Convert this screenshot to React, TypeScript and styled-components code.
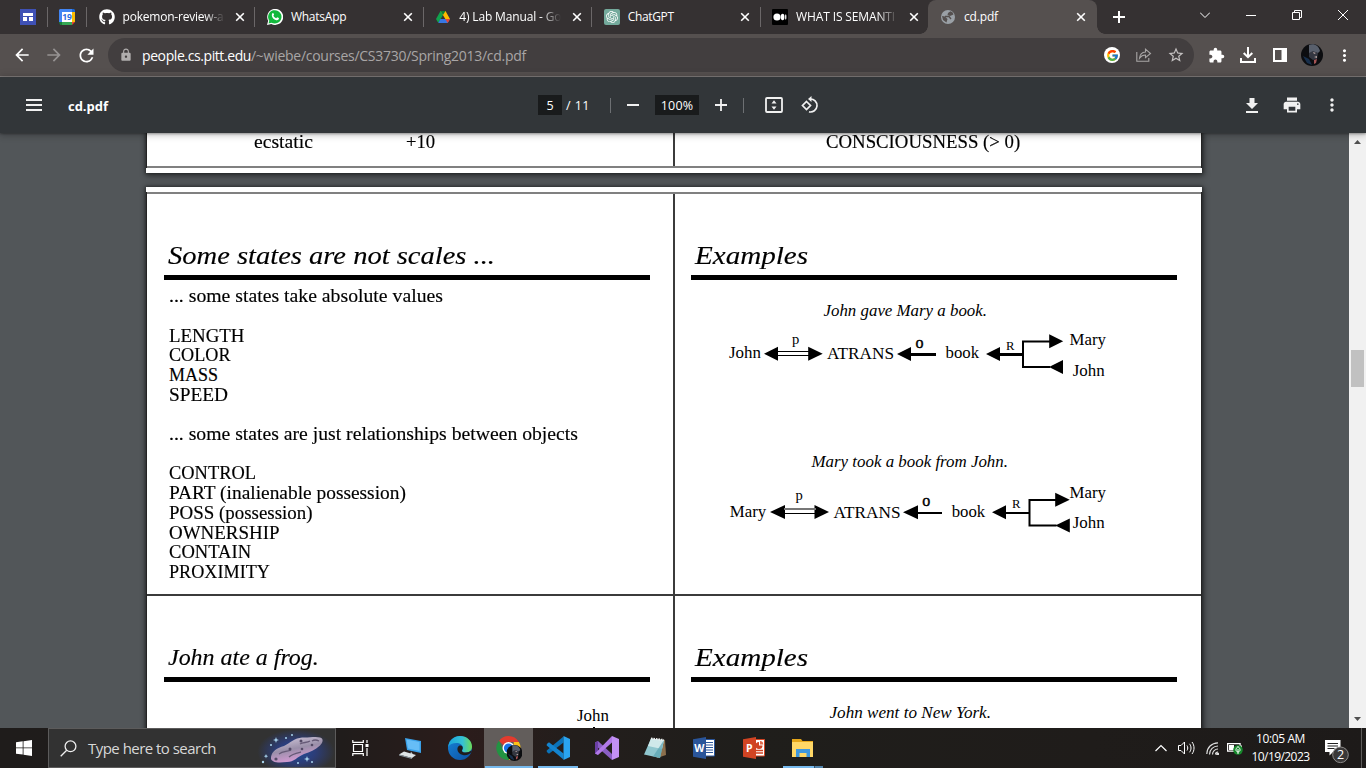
import React, { useLayoutEffect, useRef, useState } from "react";
import styled, { createGlobalStyle, css } from "styled-components";
import { FaGithub } from "react-icons/fa";
import { FcGoogle } from "react-icons/fc";
import { SiOpenai } from "react-icons/si";
import { MdExtension, MdPrint, MdMoreVert, MdLock, MdRefresh, MdArrowBack, MdArrowForward, MdStarBorder } from "react-icons/md";

const ui = `"Open Sans", "Noto Sans", sans-serif`;
const book = `"Liberation Serif", serif`;

const Global = createGlobalStyle`
  * { box-sizing: border-box; }
  body { margin: 0; background: #525659; overflow: hidden; }
  svg { display: block; flex: none; }
`;

const Screen = styled.div`
  width: 1366px;
  height: 768px;
  display: flex;
  flex-direction: column;
  overflow: hidden;
  font-family: ${ui};
`;

const FitBox = styled.span`
  display: inline-block;
  white-space: pre;
`;

/* Spreads a line of text over a given width. */
function Fit({ w, children }: { w: number; children: string }) {
  const ref = useRef<HTMLSpanElement>(null);
  const [spacing, setSpacing] = useState(0);
  useLayoutEffect(() => {
    if (ref.current) {
      const natural = ref.current.getBoundingClientRect().width;
      setSpacing((w - natural) / children.length);
    }
  }, [w, children]);
  return (
    <FitBox ref={ref} style={{ letterSpacing: spacing }}>
      {children}
    </FitBox>
  );
}

const WideOuter = styled.span`
  display: inline-block;
  white-space: pre;
`;

const WideInner = styled.span`
  display: inline-block;
  transform-origin: 0 50%;
  -webkit-text-stroke: 0.15px #000;
`;

/* Widens the letters themselves, for the broad serif face of the slides. */
function Wide({ w, children }: { w: number; children: string }) {
  const ref = useRef<HTMLSpanElement>(null);
  const [scale, setScale] = useState(1);
  useLayoutEffect(() => {
    if (ref.current) setScale(w / ref.current.offsetWidth);
  }, [w, children]);
  return (
    <WideOuter style={{ width: w }}>
      <WideInner ref={ref} style={{ transform: `scaleX(${scale})` }}>
        {children}
      </WideInner>
    </WideOuter>
  );
}

/* ---------- browser chrome ---------- */

const TabStrip = styled.div`
  height: 34px;
  flex: none;
  display: flex;
  background: #353132;
  color: #fff;
`;

const Pinned = styled.div<{ $w: number; $pad: number }>`
  width: ${(p) => p.$w}px;
  padding-left: ${(p) => p.$pad}px;
  display: flex;
  align-items: center;
`;

const Separator = styled.i`
  width: 1px;
  height: 20px;
  margin: 7px 0;
  flex: none;
  background: #6b6768;
`;

const TabBox = styled.div<{ $active?: boolean }>`
  width: ${(p) => (p.$active ? 169 : 167.4)}px;
  padding: 0 0 1px ${(p) => (p.$active ? 12 : 11.5)}px;
  flex: none;
  display: flex;
  align-items: center;
  position: relative;
  ${(p) =>
    p.$active &&
    css`
      background: #55504f;
      border-radius: 8px 8px 0 0;
      &::before,
      &::after {
        content: "";
        position: absolute;
        bottom: 0;
        width: 8px;
        height: 8px;
      }
      &::before {
        left: -8px;
        background: radial-gradient(circle at 0 0, transparent 7.5px, #55504f 8px);
      }
      &::after {
        right: -8px;
        background: radial-gradient(circle at 100% 0, transparent 7.5px, #55504f 8px);
      }
    `}
`;

const TabTitle = styled.div<{ $fade?: boolean }>`
  width: 102px;
  margin-left: 8px;
  font-size: 12px;
  line-height: 18px;
  white-space: nowrap;
  ${(p) => p.$fade && css`mask-image: linear-gradient(90deg, #000 80%, transparent 100%);`}
`;

const CloseGlyph = () => (
  <svg width="10" height="10" viewBox="0 0 10 10">
    <path d="M1.2 1.2 8.8 8.8M8.8 1.2 1.2 8.8" stroke="#fff" strokeWidth="1.6" />
  </svg>
);

const CloseSlot = styled.div`
  margin-left: 10.5px;
`;

const Favicon = styled.div<{ $bg?: string; $round?: boolean }>`
  width: 16px;
  height: 16px;
  display: grid;
  place-items: center;
  overflow: hidden;
  background: ${(p) => p.$bg || "transparent"};
  border-radius: ${(p) => (p.$round ? "2px" : "0")};
`;

type TabProps = { icon: React.ReactNode; title: string; w: number; active?: boolean; fade?: boolean };
const Tab = ({ icon, title, w, active, fade }: TabProps) => (
  <TabBox $active={active}>
    {icon}
    <TabTitle $fade={fade}>
      <Fit w={w}>{title}</Fit>
    </TabTitle>
    <CloseSlot>
      <CloseGlyph />
    </CloseSlot>
  </TabBox>
);

const NewTab = styled.div`
  padding: 11px 0 0 16px;
`;

const WindowButtons = styled.div`
  margin-left: auto;
  display: flex;
`;

const WindowButton = styled.div`
  width: 46px;
  height: 29px;
  display: grid;
  place-items: center;
`;

const NavBar = styled.div`
  height: 43px;
  flex: none;
  padding: 4px 0 0;
  display: flex;
  background: #55504f;
  border-bottom: 1px solid #807c7b;
`;

const NavButtons = styled.div`
  width: 108px;
  height: 34px;
  padding-left: 12px;
  display: flex;
  align-items: center;
  gap: 12px;
  color: #fff;
`;

const Omnibox = styled.div`
  width: 1086px;
  height: 34px;
  border-radius: 17px;
  background: #423e3f;
  display: flex;
  align-items: center;
  padding: 0 9px 0 11px;
  font-size: 14px;
  color: #a9a6a6;
`;

const Host = styled.span`
  color: #fff;
  margin-left: 9px;
`;

const OmniActions = styled.div`
  margin-left: auto;
  display: flex;
  align-items: center;
  gap: 15.5px;
`;

const GoogleDisc = styled.div`
  width: 16px;
  height: 16px;
  border-radius: 50%;
  background: #fff;
  display: grid;
  place-items: center;
`;

const Extensions = styled.div`
  height: 34px;
  display: flex;
  align-items: center;
  color: #fff;
  padding-left: 13px;
`;

const Slot = styled.div<{ $w: number }>`
  width: ${(p) => p.$w}px;
  display: grid;
  place-items: center;
`;

/* ---------- pdf toolbar ---------- */

const PdfBar = styled.div`
  height: 56px;
  flex: none;
  position: relative;
  z-index: 2;
  background: #323639;
  color: #fff;
  display: grid;
  grid-template-columns: 538px 1fr auto;
  align-items: center;
  box-shadow: 0 -2px 8px rgba(0, 0, 0, 0.09), 0 4px 8px rgba(0, 0, 0, 0.06), 0 1px 2px rgba(0, 0, 0, 0.3),
    0 2px 6px rgba(0, 0, 0, 0.15);
`;

const PdfGroup = styled.div<{ $pl?: number }>`
  display: flex;
  align-items: center;
  padding-left: ${(p) => p.$pl || 0}px;
  font-size: 12.5px;
  line-height: 21px;
`;

const DocTitle = styled.b`
  margin-left: 26px;
  font-size: 13px;
  padding-top: 2px;
`;

const Field = styled.div<{ $w: number }>`
  width: ${(p) => p.$w}px;
  height: 20px;
  background: #191b1c;
  text-align: center;
`;

const PageCount = styled.span`
  margin-left: 4px;
  width: 44px;
`;

const Rule = styled.i`
  width: 1px;
  height: 15px;
  background: #6d7073;
`;

const RotateSlot = styled.div`
  margin-left: -3px;
`;

/* ---------- document ---------- */

const Viewer = styled.div`
  height: 595px;
  flex: none;
  display: flex;
  overflow: hidden;
  background: #525659;
`;

const Pages = styled.div`
  width: 1349px;
  padding-left: 146px;
  overflow: hidden;
`;

const Sheet = styled.div<{ $first?: boolean }>`
  width: 1056px;
  height: ${(p) => (p.$first ? 40 : 560)}px;
  margin-bottom: 14px;
  padding: ${(p) => (p.$first ? "0 0 5px" : "5px 0 0")};
  background: #fff;
  box-shadow: 0 0 3px 1px rgba(0, 0, 0, 0.35), 1px 2px 6px 1px rgba(0, 0, 0, 0.4);
`;

const SlideGrid = styled.div<{ $first?: boolean }>`
  height: 100%;
  display: grid;
  grid-template-columns: 526px 526px;
  grid-template-rows: ${(p) => (p.$first ? "33px" : "400px 160px")};
  gap: 2px;
  background: #3b3b3b;
  border: 0 solid #242424;
  border-width: ${(p) => (p.$first ? "0 1px 0" : "0 1px")};
  box-shadow: inset 0 ${(p) => (p.$first ? -2 : 2)}px 0 #808080;
  padding-top: ${(p) => (p.$first ? 0 : 2)}px;
`;

const Slide = styled.section`
  background: #fff;
  overflow: hidden;
  color: #000;
  font-family: ${book};
`;

const TailRow = styled.div<{ $pl: number; $gap: number }>`
  display: flex;
  padding-left: ${(p) => p.$pl}px;
  gap: ${(p) => p.$gap}px;
  font-size: 18px;
  line-height: 18px;
`;

const SlideTitle = styled.h2<{ $size?: number; $right?: boolean }>`
  margin: 47px 0 4px ${(p) => (p.$right ? 20 : 21)}px;
  font-size: ${(p) => p.$size || 26}px;
  line-height: 30px;
  height: 30px;
  font-style: italic;
  font-weight: 400;
`;

const TitleRule = styled.div<{ $right?: boolean }>`
  width: 486px;
  height: 5px;
  margin-left: ${(p) => (p.$right ? 16 : 17)}px;
  background: #000;
`;

const Lines = styled.div`
  padding: 7.3px 0 0 22px;
`;

const Line = styled.div`
  height: 19.7px;
  line-height: 19.7px;
  font-size: 18px;
`;

const ScrollTrack = styled.div`
  width: 17px;
  background: #f1f1f1;
  display: flex;
  flex-direction: column;
  align-items: center;
  justify-content: space-between;
  padding: 7px 0 7px;
`;

const Thumb = styled.div`
  width: 13px;
  height: 37px;
  margin: 206px 0 auto;
  background: #c1c1c1;
`;

type WordProps = { x: number; y: number; w: number; size?: number; italic?: boolean; children: string };
const Word = ({ x, y, w, size = 16.5, italic, children }: WordProps) => (
  <text
    x={x}
    y={y}
    textLength={w}
    lengthAdjust="spacingAndGlyphs"
    fontSize={size}
    fontStyle={italic ? "italic" : "normal"}
    fontFamily={book}
  >
    {children}
  </text>
);
const Left = ({ x, y, s = 14 }: { x: number; y: number; s?: number }) => <path d={`M${x} ${y}l${s}-7v14z`} />;
const Right = ({ x, y, s = 14.5 }: { x: number; y: number; s?: number }) => <path d={`M${x} ${y}l${-s}-7v14z`} />;

const Diagrams = () => (
  <svg width="526" height="310" viewBox="675 280 526 310">
    <Word x={823.5} y={316.3} w={163.5} italic>John gave Mary a book.</Word>
    <Word x={729} y={358} w={32}>John</Word>
    <Left x={764} y={353.7} />
    <Right x={822.7} y={353.7} />
    <path d="M777 351.5h32M777 355.5h32" stroke="#000" strokeWidth="1" />
    <Word x={792} y={343.5} w={7.3} size={14.5}>p</Word>
    <Word x={827} y={358.7} w={67}>ATRANS</Word>
    <Left x={897} y={354} />
    <path d="M910 354.5h26" stroke="#000" strokeWidth="3" />
    <text x="915.5" y="347.8" fontSize="16" stroke="#000" strokeWidth=".4" fontFamily={book}>o</text>
    <Word x={945.5} y={358} w={33.5}>book</Word>
    <Left x={986} y={354} />
    <path d="M999 354.5h25" stroke="#000" strokeWidth="3" />
    <Word x={1006} y={350} w={8.5} size={13.5}>R</Word>
    <path d="M1050 341.5h-27v25.5h27" fill="none" stroke="#000" strokeWidth="2" />
    <Right x={1063.2} y={341.3} s={14} />
    <Left x={1049} y={367} />
    <Word x={1069.5} y={345.3} w={36.5}>Mary</Word>
    <Word x={1072.7} y={375.7} w={32}>John</Word>

    <Word x={811.5} y={467} w={196.5} italic>Mary took a book from John.</Word>
    <Word x={729.8} y={516.5} w={36.5}>Mary</Word>
    <Left x={770} y={512} s={15} />
    <Right x={829} y={512} />
    <path d="M784 509h32" stroke="#777" strokeWidth="2" />
    <path d="M784 513.5h32" stroke="#000" strokeWidth="1" />
    <Word x={795.5} y={499.7} w={7.3} size={14.5}>p</Word>
    <Word x={833.5} y={517.7} w={67}>ATRANS</Word>
    <Left x={903} y={512.3} s={15} />
    <path d="M917 513h25" stroke="#000" strokeWidth="2" />
    <text x="922.3" y="506.2" fontSize="16" stroke="#000" strokeWidth=".4" fontFamily={book}>o</text>
    <Word x={951.7} y={517.2} w={33.5}>book</Word>
    <Left x={992} y={512.3} />
    <path d="M1005 513h25" stroke="#000" strokeWidth="2" />
    <Word x={1012} y={508.2} w={8.5} size={13.5}>R</Word>
    <path d="M1056 500h-26.5v25.5h27" fill="none" stroke="#000" strokeWidth="2" />
    <Right x={1069.7} y={499.7} />
    <Left x={1055.3} y={525.5} s={14.5} />
    <Word x={1069.5} y={498} w={36.5}>Mary</Word>
    <Word x={1072.7} y={527.7} w={32}>John</Word>
  </svg>
);

const states: [string, number][] = [
  ["... some states take absolute values", 274],
  ["", 0],
  ["LENGTH", 75.5],
  ["COLOR", 61.5],
  ["MASS", 49],
  ["SPEED", 59],
  ["", 0],
  ["... some states are just relationships between objects", 409],
  ["", 0],
  ["CONTROL", 87],
  ["PART (inalienable possession)", 237],
  ["POSS (possession)", 144],
  ["OWNERSHIP", 110.5],
  ["CONTAIN", 82.5],
  ["PROXIMITY", 101],
];

/* ---------- taskbar ---------- */

const Taskbar = styled.div`
  height: 40px;
  flex: none;
  display: flex;
  background: linear-gradient(90deg, #1f1c1b 0%, #201c1b 25%, #2b1c1b 34%, #231e1c 42%, #1f1e1b 55%, #1f1c1a 80%, #1d1a19 100%);
  color: #fff;
`;

const Start = styled.div`
  width: 48px;
  display: grid;
  place-items: center;
`;

const Search = styled.div`
  width: 288px;
  border: 1px solid #5c5b5b;
  background: #323232;
  display: flex;
  align-items: center;
  padding-left: 11px;
  font-size: 15px;
  color: #d8d8d8;
  overflow: hidden;
`;

const SearchText = styled.span`
  margin-left: 11px;
  width: 129px;
`;

const Glow = styled.div`
  margin-left: 40px;
  width: 78px;
  height: 38px;
  background: radial-gradient(ellipse at 50% 60%, #1f4d99 0%, #2c3d78 35%, rgba(50, 50, 50, 0) 70%);
`;

const TaskButton = styled.div<{ $active?: boolean; $bar?: number; $w?: number; $stacked?: boolean }>`
  width: ${(p) => p.$w || 49}px;
  display: grid;
  place-items: center;
  background: ${(p) => (p.$active ? "#625d5b" : "transparent")};
  position: relative;
  ${(p) =>
    p.$bar &&
    css`
      &::after {
        content: "";
        position: absolute;
        left: calc(50% - ${p.$bar / 2}px);
        bottom: 0;
        width: ${p.$bar}px;
        height: 2px;
        background: ${p.$stacked
          ? "linear-gradient(90deg, #76b9ed 31px, #34506a 31px, #34506a 32px, #5284ab 32px)"
          : "#76b9ed"};
      }
    `}
`;

const Tray = styled.div`
  margin-left: auto;
  display: flex;
  align-items: center;
`;

const Clock = styled.div`
  width: 61px;
  margin-right: 5px;
  text-align: center;
  font-size: 12px;
  line-height: 18px;
`;

const Notice = styled.div`
  width: 45px;
  height: 40px;
  padding: 11px 0 0 8px;
`;

const PeekLine = styled.i`
  width: 1px;
  height: 40px;
  margin-right: 4px;
  background: #5d5b5a;
`;

const Avatar = ({ size }: { size: number }) => (
  <svg width={size} height={size} viewBox="0 0 22 22">
    <circle cx="11" cy="11" r="11" fill="#0c0d10" />
    <path d="M8 1c5-2 10 1 11 6l-2 2-5-1-4 2z" fill="#59606d" />
    <path d="M8 9l4-2 5 2-1 6-4 1-4-3z" fill="#343741" />
    <path d="M2 12l6 3 3 6-5-2z" fill="#18304d" />
    <path d="M12 8l3 1-2 1zM13 13l3-1v2z" fill="#b8a7a5" />
    <path d="M13 16l3-1-1 4-2 1z" fill="#a35354" />
  </svg>
);

const ChromeIcon = () => (
  <svg width="26" height="28" viewBox="0 0 26 28">
    <path d="M12.5 2a12 12 0 0 1 10.4 6H12.5L7.3 11 3 7A12 12 0 0 1 12.5 2" fill="#e33b2e" />
    <path d="M22.9 8a12 12 0 0 1-10.4 18l5.2-9V8z" fill="#fbc116" />
    <path d="M3 6.5A12 12 0 0 0 12.5 26l5-8-5 1-5-2z" fill="#229342" />
    <circle cx="12.5" cy="14" r="6" fill="#fff" />
    <circle cx="12.5" cy="14" r="4.6" fill="#1a73e8" />
    <g transform="translate(10.5 11)">
      <Avatar size={16} />
    </g>
  </svg>
);

const OfficeIcon = ({ letter, tone, dark }: { letter: string; tone: string; dark: string }) => (
  <svg width="24" height="24" viewBox="0 0 24 24">
    <path d="M12 3.5h10.5V20H12z" fill="#fff" stroke={tone} strokeWidth="1" />
    {letter === "W" ? (
      <path d="M14 6.5h7M14 9h7M14 11.5h7M14 14h7M14 16.5h7" stroke={tone} strokeWidth="1.2" />
    ) : (
      <>
        <path d="M14 14.5h7M14 17h7" stroke={tone} strokeWidth="1.3" />
        <path d="M17 6a3.500 3.500 0 1 0 3.500 3.500H17z" fill={tone} />
        <path d="M18 5a3.500 3.500 0 0 1 3.300 3.500H18z" fill={dark} />
      </>
    )}
    <path d="M1 3.2 14 1v22L1 20.8z" fill={tone} />
    <text x="7.300" y="16" textAnchor="middle" fontFamily={ui} fontWeight="700" fontSize="10.5" fill="#fff">
      {letter}
    </text>
  </svg>
);

export default function App() {
  return (
    <Screen>
      <Global />
      <TabStrip>
        <Pinned $w={47} $pad={20}>
          <svg width="16" height="16" viewBox="0 0 16 16">
            <path fill="#3f51b5" d="M0 0h16v16H0z" />
            <path fill="#fff" d="M3 4h10v3H3zM3 8h4v4H3zM9 8h4v4H9z" />
          </svg>
        </Pinned>
        <Separator />
        <Pinned $w={38} $pad={11}>
          <svg width="16" height="16" viewBox="0 0 16 16">
            <path fill="#4285f4" d="M1 0h12v3H3v10H0V1z" />
            <path fill="#1967d2" d="M13 0h2l1 1v2h-3z" />
            <path fill="#fbbc04" d="M13 3h3v10h-3z" />
            <path fill="#34a853" d="M3 13h10v3H3z" />
            <path fill="#188038" d="M0 13h3v3H1z" />
            <path fill="#ea4335" d="M13 13h3l-3 3z" />
            <path fill="#fff" d="M3 3h10v10H3z" />
            <text x="8" y="11.3" textAnchor="middle" fontSize="8.5" fontWeight="700" fontFamily={ui} fill="#2f6fe0">19</text>
          </svg>
        </Pinned>
        <Separator />
        <Tab icon={<FaGithub size={16} />} title="pokemon-review-a" w={101} fade />
        <Separator />
        <Tab
          icon={
            <svg width="16" height="16" viewBox="0 0 16 16">
              <path d="M0 16 1.2 11.8A8 8 0 1 1 4.3 14.9z" fill="#fff" />
              <path d="M1.5 14.5 2.3 11.7A6.7 6.7 0 1 1 4.5 13.7z" fill="#12b83c" />
              <path d="M5.4 4.2c.5-.5 1-.3 1.2.2l.5 1.2-.7 1.1c.6 1.3 1.5 2 2.8 2.6l1-1 1.7.8c.4 1.6-1.3 2.5-2.7 2.1C6.3 10.4 3.6 7 5.4 4.2z" fill="#fff" />
            </svg>
          }
          title="WhatsApp"
          w={55.5}
        />
        <Separator />
        <Tab
          icon={
            <svg width="16" height="16" viewBox="0 0 16 16">
              <path d="M5.5 2 1 10l2.3 4L8 6z" fill="#11a24d" />
              <path d="M5.5 2h5L15 10h-4.7z" fill="#ffba00" />
              <path d="M5.3 10H15l-2.3 4H3.3z" fill="#3777e3" />
              <path d="M5.5 2h5L8 6z" fill="#0b7d37" />
              <path d="M10.3 10H15l-2.3 4z" fill="#ea4335" />
            </svg>
          }
          title="4) Lab Manual - Go"
          w={102}
          fade
        />
        <Separator />
        <Tab icon={<Favicon $bg="#74aa9c" $round><SiOpenai size={12} /></Favicon>} title="ChatGPT" w={46} />
        <Separator />
        <Tab
          icon={
            <svg width="16" height="16" viewBox="0 0 16 16">
              <rect width="16" height="16" rx="1" fill="#000" />
              <circle cx="5" cy="8" r="3.6" fill="#fff" />
              <ellipse cx="10.6" cy="8" rx="1.8" ry="3.3" fill="#fff" />
              <ellipse cx="13.7" cy="8" rx=".8" ry="2.8" fill="#ddd" />
            </svg>
          }
          title="WHAT IS SEMANTI"
          w={99}
          fade
        />
        <Tab active icon={<Favicon><svg width="14" height="14" viewBox="0 0 14 14"><circle cx="7" cy="7" r="7" fill="#9aa0a6" /><path d="M9.5 1.2 7 3l-.5 2L9 6l3.500-1.500-.8-2zM1 6l3 .5L6.500 9 5.500 12.500 2 10z" fill="#55504f" /><path d="M4 6.5h4L10 9" fill="none" stroke="#55504f" strokeWidth="1.3" /></svg></Favicon>} title="cd.pdf" w={34} />
        <NewTab>
          <svg width="12" height="12" viewBox="0 0 12 12"><path d="M6 0v12M0 6h12" stroke="#fff" strokeWidth="2" /></svg>
        </NewTab>
        <WindowButtons>
          <WindowButton><svg width="10" height="10" viewBox="0 0 10 10"><path d="M0 2.5l5 5 5-5" fill="none" stroke="#fff" /></svg></WindowButton>
          <WindowButton><svg width="10" height="10" viewBox="0 0 10 10"><path d="M0 5.5h10" stroke="#fff" /></svg></WindowButton>
          <WindowButton><svg width="10" height="10" viewBox="0 0 10 10"><path d="M.5 2.5h7v7h-7zM2.5 2.5v-2h7v7h-2" fill="none" stroke="#fff" /></svg></WindowButton>
          <WindowButton><svg width="10" height="10" viewBox="0 0 10 10"><path d="M0 0l10 10M10 0 0 10" stroke="#fff" /></svg></WindowButton>
        </WindowButtons>
      </TabStrip>

      <NavBar>
        <NavButtons>
          <MdArrowBack size={20} />
          <MdArrowForward size={20} color="#969292" />
          <MdRefresh size={21} />
        </NavButtons>
        <Omnibox>
          <MdLock size={14} color="#b0adad" />
          <Host><Fit w={109}>people.cs.pitt.edu</Fit></Host>
          <Fit w={275}>/~wiebe/courses/CS3730/Spring2013/cd.pdf</Fit>
          <OmniActions>
            <GoogleDisc><FcGoogle size={13} /></GoogleDisc>
            <svg width="16" height="16" viewBox="0 0 16 16" fill="none" stroke="#a9a6a6" strokeWidth="1.1">
              <path d="M.8 5v9.3h12V11" />
              <path d="M3.5 11.2C3.8 7.5 6 5.3 9.5 5V2.2L14.5 6.5 9.5 10.6V8C7 8 5 9 3.5 11.2z" />
            </svg>
            <MdStarBorder size={18} color="#c4c1c1" />
          </OmniActions>
        </Omnibox>
        <Extensions>
          <Slot $w={18}><MdExtension size={17} /></Slot>
          <Slot $w={46}>
            <svg width="16" height="16" viewBox="0 0 16 16" fill="none" stroke="#fff" strokeWidth="2"><path d="M8 0v10M3.7 6 8 10.2 12.3 6M1 11v4h14v-4" /></svg>
          </Slot>
          <Slot $w={18}>
            <svg width="14" height="14" viewBox="0 0 14 14"><path d="M1 1h12v12H1z" fill="none" stroke="#fff" strokeWidth="2" /><path d="M8.5 0H14v14H8.5z" fill="#fff" /></svg>
          </Slot>
          <Slot $w={46}><Avatar size={22} /></Slot>
          <Slot $w={19}><MdMoreVert size={19} /></Slot>
        </Extensions>
      </NavBar>

      <PdfBar>
        <PdfGroup $pl={26}>
          <svg width="16" height="12" viewBox="0 0 16 12"><path d="M0 1h16M0 6h16M0 11h16" stroke="#f1f1f1" strokeWidth="2" /></svg>
          <DocTitle><Fit w={40}>cd.pdf</Fit></DocTitle>
        </PdfGroup>
        <PdfGroup>
          <Field $w={24}>5</Field>
          <PageCount><Fit w={24}>/ 11</Fit></PageCount>
          <Rule />
          <Slot $w={44}><svg width="12" height="2"><path d="M0 1h12" stroke="#f1f1f1" strokeWidth="2" /></svg></Slot>
          <Field $w={44}><Fit w={32.5}>100%</Fit></Field>
          <Slot $w={44}><svg width="12" height="12"><path d="M0 6h12M6 0v12" stroke="#f1f1f1" strokeWidth="1.8" /></svg></Slot>
          <Rule />
          <Slot $w={60}>
            <svg width="18" height="16" viewBox="0 0 18 16"><rect x="1" y="1" width="16" height="14" rx="1" fill="none" stroke="#f1f1f1" strokeWidth="1.8" /><path d="M9 3.2 11.5 6.5h-5zM9 12.8 6.5 9.5h5z" fill="#f1f1f1" /></svg>
          </Slot>
          <RotateSlot>
            <svg width="18" height="18" viewBox="0 0 18 18" fill="none" stroke="#f1f1f1" strokeWidth="1.7"><path d="M5.5 5.5 9.5 9.5 5.5 13.5 1.5 9.5z" /><path d="M9 3a6.5 6.5 0 1 1-1 12.8" /><path d="M10.5 0v6L7 3z" fill="#f1f1f1" stroke="none" /></svg>
          </RotateSlot>
        </PdfGroup>
        <PdfGroup>
          <Slot $w={40}>
            <svg width="14" height="15" viewBox="0 0 14 15"><path d="M4.5 0h5v5H13L7 11 1 5h3.5zM1 13h12v2H1z" fill="#f1f1f1" /></svg>
          </Slot>
          <Slot $w={40}><MdPrint size={20} color="#f1f1f1" /></Slot>
          <Slot $w={40}><MdMoreVert size={20} color="#f1f1f1" /></Slot>
          <Slot $w={14} />
        </PdfGroup>
      </PdfBar>

      <Viewer>
        <Pages>
          <Sheet $first>
            <SlideGrid $first>
              <Slide>
                <TailRow $pl={107} $gap={93}>
                  <Wide w={59}>ecstatic</Wide>
                  <Wide w={29}>+10</Wide>
                </TailRow>
              </Slide>
              <Slide>
                <TailRow $pl={151} $gap={0}>
                  <Wide w={194}>{"CONSCIOUSNESS (> 0)"}</Wide>
                </TailRow>
              </Slide>
            </SlideGrid>
          </Sheet>
          <Sheet>
            <SlideGrid>
              <Slide>
                <SlideTitle><Wide w={327}>Some states are not scales ...</Wide></SlideTitle>
                <TitleRule />
                <Lines>
                  {states.map(([t, w], i) => (
                    <Line key={i}>{t && <Wide w={w}>{t}</Wide>}</Line>
                  ))}
                </Lines>
              </Slide>
              <Slide>
                <SlideTitle $right><Wide w={113}>Examples</Wide></SlideTitle>
                <TitleRule $right />
                <Diagrams />
              </Slide>
              <Slide>
                <SlideTitle $size={23}><Wide w={151}>John ate a frog.</Wide></SlideTitle>
                <TitleRule />
                <svg width="526" height="70" viewBox="147 682 526 70">
                  <Word x={577} y={721} w={32}>John</Word>
                  <path d="M593 727h2v12h-2z" />
                </svg>
              </Slide>
              <Slide>
                <SlideTitle $right><Wide w={113}>Examples</Wide></SlideTitle>
                <TitleRule $right />
                <svg width="526" height="70" viewBox="675 682 526 70">
                  <Word x={829.5} y={718.3} w={161.5} italic>John went to New York.</Word>
                </svg>
              </Slide>
            </SlideGrid>
          </Sheet>
        </Pages>
        <ScrollTrack>
          <svg width="7" height="4"><path d="M0 4 3.500 0 7 4z" fill="#505050" /></svg>
          <Thumb />
          <svg width="7" height="4"><path d="M0 0 3.500 4 7 0z" fill="#505050" /></svg>
        </ScrollTrack>
      </Viewer>

      <Taskbar>
        <Start>
          <svg width="16" height="16" viewBox="0 0 16 16"><path d="M0 2.3 6.7 1.3v6.2H0zM7.5 1.2 16 0v7.5H7.5zM0 8.3h6.7v6.3L0 13.7zM7.5 8.3H16V16l-8.500-1.200z" fill="#fff" /></svg>
        </Start>
        <Search>
          <svg width="17" height="17" viewBox="0 0 17 17" fill="none" stroke="#eee" strokeWidth="1.3"><circle cx="10.5" cy="6.3" r="5.4" /><path d="M6.7 10.2.7 16.2" /></svg>
          <SearchText><Fit w={128}>Type here to search</Fit></SearchText>
          <Glow>
            <svg width="78" height="38" viewBox="-4 0 78 38">
              <defs>
                <linearGradient id="rock" x1="0" y1="0" x2=".4" y2="1">
                  <stop offset="0" stopColor="#d9d0e2" />
                  <stop offset=".55" stopColor="#9a8fa9" />
                  <stop offset="1" stopColor="#d79bd6" />
                </linearGradient>
              </defs>
              <path d="M10 28C11 22 16 19 23 17 29 14 34 9 41 8.500 48 9 54 7 59 8.500c4 1 3 5 0 8C54 21 49 23 43 25 36 28 33 33 26 33 18 34 9 34 10 28z" fill="url(#rock)" />
              <path d="M18 25c4-3 8-2 12-4M39 15c3-2 7-1 10-3M28 28c3-3 8-4 12-5M51 12c3-2 5-1 7 0" stroke="#665a77" strokeWidth="1.3" fill="none" />
              <g fill="#544a66"><circle cx="29" cy="20" r="1.500" /><circle cx="40" cy="12" r="1.500" /><circle cx="15" cy="30" r="1.600" /><circle cx="41" cy="20" r="1.300" /><circle cx="51" cy="16" r="1.300" /></g>
              <g fill="#a9d4ee"><path d="M15 8l.8 2.200 2.200.8-2.200.8-.8 2.200-.8-2.200-2.200-.8 2.200-.8zM46 27l.8 2.200 2.200.8-2.200.8-.8 2.200-.8-2.200-2.200-.8 2.200-.8zM5 25l.6 1.600 1.600.6-1.600.6L5 29.500l-.6-1.700-1.600-.6 1.600-.6z" /><circle cx="25" cy="9" r="1" /><circle cx="31" cy="6" r="1" /><circle cx="10" cy="16" r="1" /><circle cx="37" cy="34" r="1" /><circle cx="51" cy="33" r="1" /><circle cx="2" cy="33" r="1.200" /></g>
            </svg>
          </Glow>
        </Search>
        <TaskButton>
          <svg width="17" height="16" viewBox="0 0 17 16" fill="none" stroke="#fff" strokeWidth="1.2"><path d="M1.5 4.5h9v7h-9zM.8 0v2.3h10.5V0M.8 16v-2.3h10.5V16M15 0v3M15 8v8" /><path d="M13.5 4h3v3h-3z" fill="#fff" stroke="none" /></svg>
        </TaskButton>
        <TaskButton $w={50}>
          <svg width="24" height="24" viewBox="0 0 24 24"><path d="M7 2 23 5v12L9 14z" fill="#3aa0e8" /><path d="M8.5 3.5 21.5 6v9L10 12.5z" fill="#66bdf7" /><path d="M13 15.5l2 3-3 1z" fill="#b9c4cb" /><path d="M6 15.5l12 3.5-4 3L1 18.5z" fill="#dfe4e6" /><path d="M1 18.5l13 3.5v1L1 19.5z" fill="#8d9aa2" /></svg>
        </TaskButton>
        <TaskButton>
          <svg width="24" height="24" viewBox="0 0 24 24">
            <defs>
              <linearGradient id="ea" x1="0" x2="1"><stop offset="0" stopColor="#1ba5dc" /><stop offset=".6" stopColor="#35c1d5" /><stop offset="1" stopColor="#6ddc56" /></linearGradient>
              <linearGradient id="eb" x1="0" x2="1" y2="1"><stop offset="0" stopColor="#1683d8" /><stop offset="1" stopColor="#0c4fa0" /></linearGradient>
            </defs>
            <circle cx="12" cy="12" r="12" fill="url(#eb)" />
            <path d="M.2 11C1 4 6 0 12 0c7 0 12 5 12 10.500 0 4-3 6-6.500 6-2.500 0-3.800-1-3.400-2 .5-.8 1-1.500.8-3C14.500 9 12 7 8.500 7 4.500 7 1.500 8.500.2 11z" fill="url(#ea)" />
            <path d="M11.500 9.500c-3 1-3.500 8 3.500 9.500 3 .6 6-.3 8.500-3v-1.500c-1.500 1.200-3.500 2-6 2-4 0-4-2-3-3.500.8-2-.5-4-3-3.500z" fill="#201c1b" />
          </svg>
        </TaskButton>
        <TaskButton $active $bar={48} $w={49}><ChromeIcon /></TaskButton>
        <TaskButton $bar={40}>
          <svg width="24" height="24" viewBox="0 0 24 24"><path d="M17.5.5v6L3 17.8.8 16 .7 14.5z" fill="#0b72b8" /><path d="M.8 8 3 6.2 17.5 17.5v6L.7 9.5z" fill="#1484cf" /><path d="M17.5 0 24 3v18l-6.5 3z" fill="#2aa4f0" /></svg>
        </TaskButton>
        <TaskButton>
          <svg width="24" height="24" viewBox="0 0 24 24"><path d="M0 6.5 3 5l14 13v6L0 9z" fill="#8a5fc4" /><path d="M0 6.5 3 5v14l-3-1.5z" fill="#6b3fa5" /><path d="M17 0v6.5L3 19l-3-1.5z" fill="#b179e8" /><path d="M17 0 24 3v18l-7 3z" fill="#c390f5" /></svg>
        </TaskButton>
        <TaskButton $w={48}>
          <svg width="24" height="24" viewBox="0 0 24 24"><path d="M10 3 22 4l1 15-9 3z" fill="#8b6f4c" /><path d="M8 2.5 21 4 17 22 1 18.5z" fill="#8fc6ce" /><path d="M8 2.5 21 4l-2 9L5 10z" fill="#cfe8ea" /><path d="M21 4 17 22 10 20.5z" fill="#57a2b0" opacity=".7" /><path d="M8 2.5 21 4" stroke="#eee" strokeWidth="2" strokeDasharray="1.5 1" /></svg>
        </TaskButton>
        <TaskButton $w={50}><OfficeIcon letter="W" tone="#2a5599" dark="#1b3f78" /></TaskButton>
        <TaskButton><OfficeIcon letter="P" tone="#d04423" dark="#e06a4c" /></TaskButton>
        <TaskButton $bar={40} $stacked>
          <svg width="24" height="24" viewBox="0 0 24 24"><path d="M1 3h9l1.500 2H22v15H1z" fill="#e5a61a" /><path d="M1 6h21v15H1z" fill="#ffd766" /><path d="M5 13h14v8h-3.500v-4h-7v4H5z" fill="#3f97dd" /></svg>
        </TaskButton>
        <Tray>
          <svg width="12" height="8" viewBox="0 0 12 8"><path d="M.5 7 6 1.500 11.500 7" fill="none" stroke="#fff" strokeWidth="1.2" /></svg>
          <Slot $w={39}>
            <svg width="17" height="14" viewBox="0 0 17 14" fill="none" stroke="#fff"><path d="M.5 4.500h2.500l3.500-3.500v12L3 9.500H.5zM9 4.500c1 1.500 1 3.500 0 5M11.500 2.800c2 2.500 2 6 0 8.500M14 1c2.700 3.500 2.700 8.500 0 12" /></svg>
          </Slot>
          <svg width="13" height="13" viewBox="0 0 13 13" fill="none" stroke="#ddd" strokeWidth="1.2"><path d="M.8 12C1 5.500 5.500 1 12 .8M3.500 12.500C3.500 7.500 7.500 4 12 4M6.500 12.500C6.500 9.500 9 7 12 7M9.500 12.500c0-1.500 1-2.500 2.500-2.500" /><circle cx="11.7" cy="12" r="1" fill="#fff" /></svg>
          <Slot $w={31}>
            <svg width="16" height="14" viewBox="0 0 16 14"><path d="M.6 2.600h12.500v7.500H.6z" fill="none" stroke="#fff" strokeWidth="1.2" /><path d="M2 4h5v5H2zM14 4.500h1v3h-1z" fill="#fff" /><circle cx="11" cy="9" r="4.8" fill="#16882b" /><path d="M11 5.500c3 2.500 2.500 5 0 5.500-2.500-.5-3-3 0-5.500zM11 8v5" fill="none" stroke="#fff" /></svg>
          </Slot>
          <Clock>
            <Fit w={49}>10:05 AM</Fit>
            <Fit w={58}>10/19/2023</Fit>
          </Clock>
          <Notice>
            <svg width="26" height="26" viewBox="0 0 26 26">
              <path d="M1 1h15.500v12H9l-3.500 3.500V13H1z" fill="#fff" />
              <path d="M3.500 4.500h10.500M3.500 7h10.500M3.500 9.500h7" stroke="#222" strokeWidth="1.1" />
              <circle cx="16.5" cy="15.8" r="7.8" fill="#3a3838" stroke="#8e8c8b" />
              <text x="16.5" y="20.2" textAnchor="middle" fontSize="12.5" fontFamily={ui} fill="#fff">2</text>
            </svg>
          </Notice>
          <PeekLine />
        </Tray>
      </Taskbar>
    </Screen>
  );
}
